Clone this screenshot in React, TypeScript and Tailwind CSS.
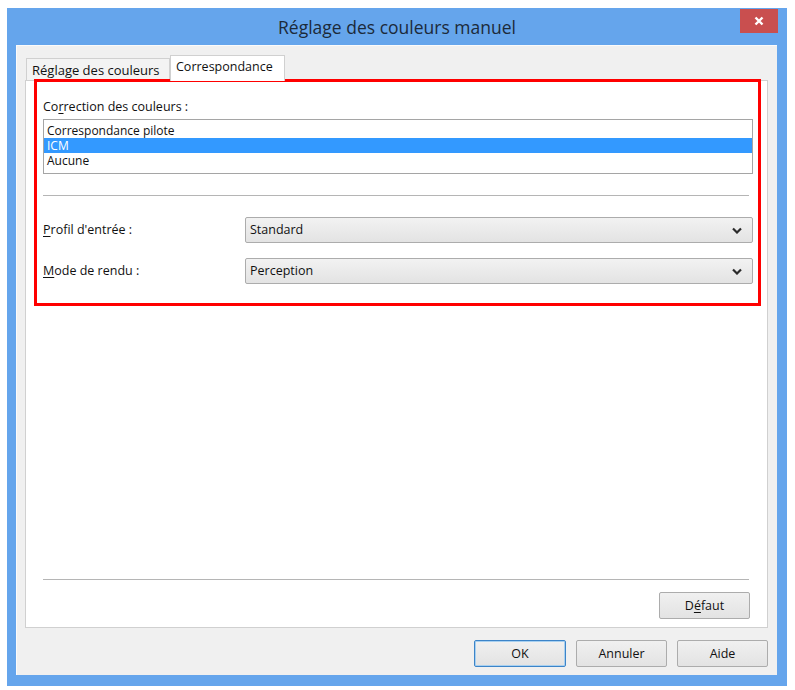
import React from 'react'

const ui = { fontFamily: '"Open Sans", "Liberation Sans", sans-serif' }

function Mn({ children }: { children: React.ReactNode }) {
  // mnemonic letter, underlined like Win32 accelerators
  return <span className="underline underline-offset-2">{children}</span>
}

function Chevron() {
  return (
    <svg width="10" height="7" viewBox="0 0 10 7" className="shrink-0">
      <path d="M1 1.5 L5 5.5 L9 1.5" fill="none" stroke="#2b2b2b" strokeWidth="2.2" />
    </svg>
  )
}

function Combo({ value }: { value: string }) {
  return (
    <div className="flex h-[26px] w-[508px] items-center justify-between rounded-[2px] border border-[#acacac] bg-gradient-to-b from-[#f2f2f2] to-[#e3e3e3] pl-[4px] pr-[10px]">
      <span className="text-[12.5px] leading-[16px] text-[#111]">{value}</span>
      <Chevron />
    </div>
  )
}

function Button({ label, focused = false, className = '' }: { label: React.ReactNode; focused?: boolean; className?: string }) {
  return (
    <div
      className={`flex h-[27px] items-center justify-center rounded-[2px] border bg-gradient-to-b from-[#f0f0f0] to-[#e3e3e3] text-[12.5px] leading-[16px] text-[#111] ${
        focused ? 'border-[#3c84c8] shadow-[inset_0_0_0_1px_#a8d0f0]' : 'border-[#acacac]'
      } ${className}`}
    >
      {label}
    </div>
  )
}

export default function App() {
  const modes = ['Correspondance pilote', 'ICM', 'Aucune']

  return (
    <div className="h-[690px] w-[795px] bg-white pl-[7px] pt-[8px]" style={ui}>
      <div className="flex h-[678px] w-[780px] flex-col bg-[#65a5ec]">
        {/* Title bar */}
        <div className="relative flex h-[37px] shrink-0 items-center justify-center">
          <span className="text-[17.5px] leading-[22px] text-[#1c2a3a]">Réglage des couleurs manuel</span>
          <div className="absolute right-[9px] top-[1px] flex h-[24px] w-[38px] items-center justify-center bg-[#c94f4f]">
            <svg width="10" height="10" viewBox="0 0 10 10">
              <path d="M1.5 1.5 L8.5 8.5 M8.5 1.5 L1.5 8.5" stroke="white" strokeWidth="2.4" />
            </svg>
          </div>
        </div>

        {/* Client area */}
        <div className="ml-[9px] mr-[10px] flex h-[630px] flex-col border-l border-t border-[#fbfbfb] bg-[#f0f0f0] pl-[8px] pr-[9px] pt-[9px]">
          {/* Tabs */}
          <div className="flex h-[25px] items-end pl-[1px]">
            <div className="flex h-[22px] w-[144px] items-center border border-b-0 border-[#d0d0d0] bg-[#f3f3f3] pl-[5px] text-[13px] leading-[16px] text-[#111]">
              Réglage des couleurs
            </div>
            <div className="relative z-10 -mb-px flex h-[26px] w-[115px] items-start border border-b-0 border-[#d0d0d0] bg-white pl-[5px] pt-[3px] text-[12.5px] leading-[16px] text-[#111]">
              Correspondance
            </div>
          </div>

          {/* Tab page */}
          <div className="flex h-[548px] flex-col border border-[#d0d0d0] bg-white">
            <div className="-mt-[2px] ml-[8px] mr-[6px] border-[3px] border-[#ff0000] pb-[19px] pl-[6px] pr-[5px] pt-[17px]">
              <div className="h-[16px] text-[12.5px] leading-[16px] text-[#111]">
                Co<Mn>r</Mn>rection des couleurs :
              </div>
              <div className="mt-[4px] flex h-[55px] flex-col border border-[#a5a5a5] pt-[3px]">
                {modes.map((m) => (
                  <div
                    key={m}
                    className={`flex h-[15px] items-center overflow-hidden pl-[3px] ${
                      m === 'ICM' ? 'bg-[#3399ff] text-white' : 'text-[#111]'
                    }`}
                  >
                    <span className="text-[12px] leading-[13px]">{m}</span>
                  </div>
                ))}
              </div>

              <div className="mr-[4px] mt-[21px] h-[2px] border-t border-[#b5b5b5] bg-white" />

              <div className="mt-[20px] flex items-center justify-between">
                <span className="text-[12.5px] leading-[16px] text-[#111]">
                  <Mn>P</Mn>rofil d'entrée :
                </span>
                <Combo value="Standard" />
              </div>
              <div className="mt-[15px] flex items-center justify-between">
                <span className="text-[12.5px] leading-[16px] text-[#111]">
                  <Mn>M</Mn>ode de rendu :
                </span>
                <Combo value="Perception" />
              </div>
            </div>

            <div className="flex-1" />

            <div className="ml-[17px] mr-[18px] border-t border-[#b5b5b5]" />
            <div className="mb-[8px] mr-[17px] mt-[12px] flex justify-end">
              <Button
                className="h-[26px] w-[91px]"
                label={
                  <>
                    D<Mn>é</Mn>faut
                  </>
                }
              />
            </div>
          </div>

          {/* Dialog buttons */}
          <div className="mt-[12px] flex justify-end gap-[10px]">
            <Button className="w-[92px]" label="OK" focused />
            <Button className="w-[91px]" label="Annuler" />
            <Button className="w-[91px]" label="Aide" />
          </div>
        </div>
      </div>
    </div>
  )
}
